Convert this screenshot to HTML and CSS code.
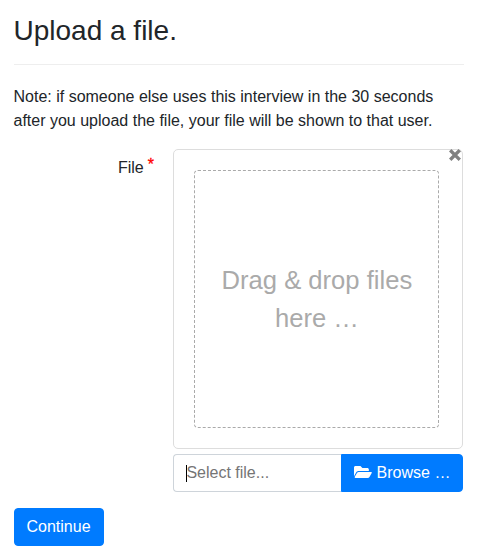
FILE: index.html
```html
<!DOCTYPE html>
<html lang="en">
<head>
<meta charset="utf-8">
<title>Upload a file.</title>
<link rel="stylesheet" href="styles.css">
</head>
<body>
<main class="container">
  <div class="page-header"><h1>Upload a file.</h1></div>
  <p class="note">Note: if someone else uses this interview in the 30 seconds after you upload the file, your file will be shown to that user.</p>
  <form>
    <div class="form-row">
      <label class="form-label">File<span class="required">*</span></label>
      <div class="file-input">
        <div class="file-preview">
          <button type="button" class="close" aria-label="Close">
            <svg width="12" height="12" viewBox="0 0 12 12"><path d="M2.4 2.4 9.6 9.6M9.6 2.4 2.4 9.6" stroke="#808080" stroke-width="3.4" stroke-linecap="square"/></svg>
          </button>
          <div class="drop-zone"><div class="drop-title">Drag &amp; drop files here …</div></div>
        </div>
        <div class="input-group">
          <div class="caption"><span class="caret"></span><span class="placeholder">Select file...</span></div>
          <div class="btn browse">
            <svg class="folder" width="18" height="16" viewBox="0 0 576 512"><path fill="#fff" d="M572.694 292.093L500.27 416.248A63.997 63.997 0 0 1 444.989 448H45.025c-18.523 0-30.064-20.093-20.731-36.093l72.424-124.155A64 64 0 0 1 152 256h399.964c18.523 0 30.064 20.093 20.73 36.093zM152 224h328v-48c0-26.51-21.49-48-48-48H272l-64-64H48C21.49 64 0 85.49 0 112v278.046l69.077-118.418C86.214 242.25 117.989 224 152 224z"/></svg>
            <span>Browse …</span>
          </div>
        </div>
      </div>
    </div>
    <button type="button" class="btn">Continue</button>
  </form>
</main>
</body>
</html>
```

FILE: styles.css
```css
* { box-sizing: border-box; }

body {
  margin: 0;
  background: #fff;
  color: #212529;
  font: 16px/24px "Liberation Sans", Arial, sans-serif;
  overflow: hidden;
}

.container {
  width: 450px;
  margin-left: 13.5px;
  padding-top: 14px;
}

.page-header {
  margin-bottom: 20px;
  padding-bottom: 8px;
  border-bottom: 1px solid #eee;
}

h1 {
  margin: 0 0 8px;
  font-size: 28px;
  font-weight: 400;
  line-height: 1.2;
}

.note { margin: 0 0 16px; }

.form-row {
  display: flex;
  margin-bottom: 16px;
}

.form-label {
  width: 140.5px;
  padding-top: 7px;
  text-align: right;
}

.required {
  margin-left: 4px;
  color: #f00;
  font-size: 16px;
  line-height: 0;
  position: relative;
  top: -3px;
  -webkit-text-stroke: 0.3px #f00;
}

.file-input {
  width: 290px;
  margin-left: 19.4px;
}

.file-preview {
  position: relative;
  margin-bottom: 5px;
  padding: 8px;
  border: 1px solid #ddd;
  border-radius: 5px;
}

.close {
  position: absolute;
  top: -1px;
  right: 1px;
  padding: 0;
  border: 0;
  background: none;
  line-height: 0;
}

.close svg { display: block; }

.drop-zone {
  margin: 12px 15px 12px 12px;
  padding: 5px;
  border: 1px dashed #aaa;
  border-radius: 4px;
  text-align: center;
}

.drop-title {
  padding: 85px 10px;
  color: #aaa;
  font-size: 25.6px;
  line-height: 38.4px;
}

.input-group { display: flex; }

.caption {
  display: flex;
  flex: 1;
  align-items: center;
  height: 38px;
  padding: 0 12px;
  border: 1px solid #ced4da;
  border-right: 0;
  border-radius: 4px 0 0 4px;
  color: #6c757d;
}

.caret {
  width: 1px;
  height: 17px;
  margin-right: -1px;
  background: #000;
}

.placeholder { color: #757575; }

.btn {
  height: 38px;
  padding: 6px 12px;
  border: 1px solid #007bff;
  border-radius: 4px;
  background: #007bff;
  color: #fff;
  font: inherit;
}

.browse {
  display: flex;
  align-items: center;
  gap: 4.4px;
  width: 122px;
  border-radius: 0 4px 4px 0;
  white-space: nowrap;
}

.folder { margin-bottom: 2px; }
```
